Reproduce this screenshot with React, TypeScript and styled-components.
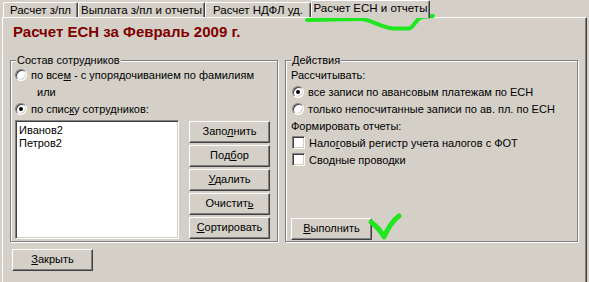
import React from 'react';
import styled, { createGlobalStyle } from 'styled-components';

const GlobalStyle = createGlobalStyle`
  html, body {
    margin: 0;
    padding: 0;
    background: #d4d0c8;
  }
`;

const Root = styled.div`
  position: relative;
  width: 589px;
  height: 282px;
  overflow: hidden;
  display: flex;
  flex-direction: column;
  background: #d4d0c8;
  font-family: 'Liberation Sans', Arial, sans-serif;
  font-size: 11px;
  color: #000;
`;

const TabStrip = styled.div`
  display: flex;
  align-items: flex-end;
  height: 17px;
  padding-left: 3px;
  position: relative;
  z-index: 1;
`;

const Tab = styled.div<{ $width: number; $active?: boolean }>`
  box-sizing: border-box;
  width: ${({ $width }) => $width}px;
  height: ${({ $active }) => ($active ? 18 : 15)}px;
  margin-bottom: ${({ $active }) => ($active ? -1 : 0)}px;
  border-top: 1px solid #fff;
  border-left: 1px solid #fff;
  border-right: 1px solid #404040;
  box-shadow: inset -1px 0 0 #808080;
  border-radius: 2px 2px 0 0;
  background: #d4d0c8;
  font-size: 11.5px;
  line-height: ${({ $active }) => ($active ? 14 : 14)}px;
  text-align: center;
  white-space: nowrap;
  overflow: hidden;
`;

const Panel = styled.div`
  flex: 1;
  margin-left: 2px;
  width: 585px;
  box-sizing: border-box;
  border-top: 1px solid #fff;
  border-left: 1px solid #fff;
  border-right: 1px solid #404040;
  box-shadow: inset -1px 0 0 #808080;
  padding: 0 8px 0 7px;
  display: flex;
  flex-direction: column;
`;

const Title = styled.div`
  margin-top: 5px;
  padding-left: 3px;
  height: 18px;
  line-height: 18px;
  font-size: 15px;
  font-weight: bold;
  color: #800000;
`;

const Groups = styled.div`
  margin-top: 19px;
  display: grid;
  grid-template-columns: 268px 293px;
  column-gap: 7px;
  height: 182px;
`;

const Group = styled.div`
  position: relative;
  box-sizing: border-box;
  border: 1px solid #808080;
  box-shadow: inset 1px 1px 0 #fff, 1px 1px 0 #fff;
  padding: 5px 4px 0 4px;
  display: flex;
  flex-direction: column;
`;

const Legend = styled.span`
  position: absolute;
  top: -7px;
  left: 5px;
  padding: 0 1px;
  line-height: 13px;
  background: #d4d0c8;
`;

const Row = styled.div<{ $indent?: number }>`
  display: flex;
  align-items: center;
  height: 17px;
  padding-left: ${({ $indent }) => $indent ?? 0}px;
  white-space: pre;
`;

const Radio = styled.span<{ $checked?: boolean }>`
  position: relative;
  box-sizing: border-box;
  width: 12px;
  height: 12px;
  margin-right: 4px;
  border-radius: 50%;
  border: 1px solid;
  border-color: #808080 #fff #fff #808080;
  box-shadow: inset 1px 1px 0 #404040, inset -1px -1px 0 #d4d0c8;
  background: #fff;
  flex-shrink: 0;
  &::after {
    content: '';
    display: ${({ $checked }) => ($checked ? 'block' : 'none')};
    position: absolute;
    left: 3px;
    top: 3px;
    width: 4px;
    height: 4px;
    border-radius: 50%;
    background: #000;
  }
`;

const Check = styled.span`
  box-sizing: border-box;
  width: 13px;
  height: 13px;
  margin-right: 4px;
  border: 1px solid;
  border-color: #808080 #fff #fff #808080;
  box-shadow: inset 1px 1px 0 #404040, inset -1px -1px 0 #d4d0c8;
  background: #fff;
  flex-shrink: 0;
`;

const ListArea = styled.div`
  display: flex;
  margin-top: 3px;
`;

const ListBox = styled.div`
  box-sizing: border-box;
  width: 164px;
  height: 119px;
  border: 1px solid;
  border-color: #808080 #fff #fff #808080;
  box-shadow: inset 1px 1px 0 #404040, inset -1px -1px 0 #d4d0c8;
  background: #fff;
  padding: 3px 0 0 3px;
  line-height: 13px;
`;

const ButtonColumn = styled.div`
  display: flex;
  flex-direction: column;
  gap: 2px;
  margin: 1px 0 0 10px;
`;

const Button = styled.div`
  box-sizing: border-box;
  width: 81px;
  height: 22px;
  border: 1px solid;
  border-color: #fff #404040 #404040 #fff;
  box-shadow: inset -1px -1px 0 #808080;
  background: #d4d0c8;
  line-height: 19px;
  text-align: center;
  white-space: nowrap;
`;

const Spacer = styled.div`
  flex: 1;
`;

const ActionButton = styled(Button)`
  margin: 0 0 1px 1px;
`;

const Footer = styled.div`
  margin-top: 7px;
  padding-left: 2px;
`;

const Marks = styled.svg`
  position: absolute;
  left: 0;
  top: 0;
  pointer-events: none;
`;

export default function App() {
  return (
    <>
      <GlobalStyle />
      <Root>
        <TabStrip>
          <Tab $width={75}>Расчет з/пл</Tab>
          <Tab $width={127}>Выплата з/пл и отчеты</Tab>
          <Tab $width={106}>Расчет НДФЛ уд.</Tab>
          <Tab $width={119} $active>
            Расчет ЕСН и отчеты
          </Tab>
        </TabStrip>
        <Panel>
          <Title>Расчет ЕСН за Февраль 2009 г.</Title>
          <Groups>
            <Group>
              <Legend>Состав сотрудников</Legend>
              <Row>
                <Radio />
                {'по все'}
                <u>м</u>
                {' - с упорядочиванием по фамилиям'}
              </Row>
              <Row $indent={22}>или</Row>
              <Row>
                <Radio $checked />
                по спис<u>к</u>у сотрудников:
              </Row>
              <ListArea>
                <ListBox>
                  <div>Иванов2</div>
                  <div>Петров2</div>
                </ListBox>
                <ButtonColumn>
                  <Button>
                    Запо<u>л</u>нить
                  </Button>
                  <Button>
                    Под<u>б</u>ор
                  </Button>
                  <Button>
                    <u>У</u>далить
                  </Button>
                  <Button>
                    Очистит<u>ь</u>
                  </Button>
                  <Button>
                    <u>С</u>ортировать
                  </Button>
                </ButtonColumn>
              </ListArea>
            </Group>
            <Group>
              <Legend>Действия</Legend>
              <Row $indent={1}>Рассчитывать:</Row>
              <Row $indent={2}>
                <Radio $checked />
                все записи по авансовым платежам по ЕСН
              </Row>
              <Row $indent={2}>
                <Radio />
                только непосчитанные записи по ав. пл. по ЕСН
              </Row>
              <Row $indent={1}>Формировать отчеты:</Row>
              <Row $indent={2}>
                <Check />
                Нало<u>г</u>овый регистр учета налогов с ФОТ
              </Row>
              <Row $indent={2}>
                <Check />
                Сво<u>д</u>ные проводки
              </Row>
              <Spacer />
              <ActionButton>
                <u>В</u>ыполнить
              </ActionButton>
            </Group>
          </Groups>
          <Footer>
            <Button>
              <u>З</u>акрыть
            </Button>
          </Footer>
        </Panel>
        <Marks width="589" height="282" viewBox="0 0 589 282">
          <path
            d="M307 20 L360 19 C370 19 380 27 393 28.5 L409 28.5 C414 28 416 18 422 17 L433 16"
            fill="none"
            stroke="#1fe61f"
            strokeWidth="4"
            strokeLinecap="round"
            strokeLinejoin="round"
          />
          <path
            d="M371 222 C376 226 381 231 384 237 C388 228 392 221 399 216"
            fill="none"
            stroke="#1fe61f"
            strokeWidth="5"
            strokeLinecap="round"
            strokeLinejoin="round"
          />
        </Marks>
      </Root>
    </>
  );
}
